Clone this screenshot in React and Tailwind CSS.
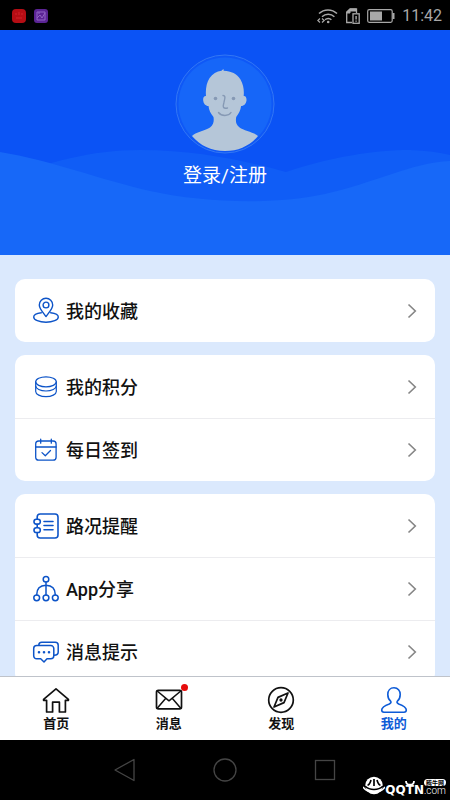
import React from "react";

const font = "font-[Roboto,'Noto_Sans_CJK_SC',sans-serif]";

function Icon({ size = "size-7", children, width = 1.5 }) {
  return (
    <svg
      viewBox="0 0 28 28"
      className={`${size} shrink-0`}
      fill="none"
      stroke="currentColor"
      strokeWidth={width}
      strokeLinecap="round"
      strokeLinejoin="round"
      aria-hidden="true"
    >
      {children}
    </svg>
  );
}

const icons = {
  pin: (
    <Icon width={1.4}>
      <path d="M14 19.500C10.400 14.600 7.300 11.600 7.300 7.900a6.700 6.700 0 0 1 13.400 0c0 3.700-3.100 6.700-6.700 11.600z" />
      <circle cx="14" cy="8" r="2.900" />
      <path d="M9.300 15.800c-4.500.6-7.600 2-7.600 4.200 0 3 5.500 5.200 12.300 5.200s12.300-2.200 12.300-5.200c0-2.200-3.100-3.600-7.600-4.200" />
    </Icon>
  ),
  coins: (
    <Icon width={1.2}>
      <ellipse cx="14" cy="8.800" rx="10.300" ry="5" />
      <path d="M3.700 8.800V13c0 2.700 4.600 5 10.300 5s10.300-2.300 10.300-5V8.800" />
      <path d="M3.700 13v5.400c0 2.800 4.600 5.300 10.300 5.300s10.300-2.500 10.300-5.300V13" />
    </Icon>
  ),
  calendar: (
    <Icon width={1.3}>
      <rect x="3.700" y="5" width="20.400" height="19.200" rx="3" />
      <path d="M3.700 11h20.400M8.700 3.200v4M19.300 3.200v4M10 16.600l3.300 3.100 5.200-5.200" />
    </Icon>
  ),
  notebook: (
    <Icon width={1.6}>
      <path d="M5.200 7.200V5a3 3 0 0 1 3-3H23a3 3 0 0 1 3 3v18a3 3 0 0 1-3 3H8.200a3 3 0 0 1-3-3v-2M5.200 12.500v2.800" />
      <rect x="2" y="7.300" width="6.300" height="4.800" rx="2.300" />
      <rect x="2" y="15.700" width="6.300" height="4.800" rx="2.300" />
      <path d="M12 9.500h9M12 13.500h9M12 17.800h9" />
    </Icon>
  ),
  share: (
    <Icon width={1.5}>
      <circle cx="14" cy="4.300" r="2.800" />
      <circle cx="4.700" cy="22.800" r="2.900" />
      <circle cx="14" cy="22.800" r="2.900" />
      <circle cx="23.300" cy="22.800" r="2.900" />
      <path d="M14 7.200v12.500M4.700 19.800c0-5.600 3.300-9.300 9.300-9.500 6 .2 9.300 3.900 9.300 9.500" />
    </Icon>
  ),
  chat: (
    <Icon width={1.5}>
      <path d="M4.700 7.600h14.100a3 3 0 0 1 3 3v7.200a3 3 0 0 1-3 3h-3.800L12 24l-3.300-3.200h-4a3 3 0 0 1-3-3v-7.200a3 3 0 0 1 3-3z" />
      <path d="M6.800 7.200c0-2 1.200-3 3-3h13.400a3 3 0 0 1 3 3V14c0 2-1.200 3.200-4 3.200" />
      <path d="M7 14.300h.01M12 14.300h.01M17 14.300h.01" strokeWidth="2.600" />
    </Icon>
  ),
  home: (
    <Icon width={1.7}>
      <path d="M14 2.800 1.600 13.300v1h3V26h6v-9.800h6.800V26h6V14.300h3v-1z" />
    </Icon>
  ),
  mail: (
    <Icon width={1.7}>
      <rect x="1.500" y="4.300" width="25" height="18.600" rx="1.800" />
      <path d="M2.200 5 14 14.800 25.800 5M2.200 22.200l8.600-10M25.800 22.200l-8.600-10" strokeWidth="1.500" />
    </Icon>
  ),
  compass: (
    <Icon width={1.7}>
      <circle cx="14" cy="14" r="12.300" />
      <path d="M21 7 17 16.600 7 21 11 11.400z" />
      <circle cx="14" cy="14" r=".8" fill="currentColor" />
    </Icon>
  ),
  person: (
    <Icon width={1.6}>
      <path d="M14 1.800c-3.900 0-6.200 2.800-6.200 6.600 0 2.900 1.200 5.500 3 6.900.6 1-.2 2-1.500 2.600-4.600 1.600-7.600 3-7.600 6.100 0 1.600.8 2.200 2.300 2.200h20c1.500 0 2.300-.6 2.300-2.200 0-3.100-3-4.500-7.600-6.100-1.300-.6-2.100-1.600-1.500-2.600 1.800-1.400 3-4 3-6.900 0-3.800-2.300-6.600-6.200-6.600z" />
    </Icon>
  ),
};

const groups = [
  [{ icon: "pin", label: "我的收藏" }],
  [
    { icon: "coins", label: "我的积分" },
    { icon: "calendar", label: "每日签到" },
  ],
  [
    { icon: "notebook", label: "路况提醒" },
    { icon: "share", label: "App分享" },
    { icon: "chat", label: "消息提示" },
  ],
];

const tabs = [
  { icon: "home", label: "首页" },
  { icon: "mail", label: "消息", unread: true },
  { icon: "compass", label: "发现" },
  { icon: "person", label: "我的", active: true },
];

function StatusBar() {
  return (
    <div className="flex h-[30px] shrink-0 items-center bg-black px-2 pt-px text-[#a8a8a8]">
      <div className="flex flex-1 gap-2 pl-1">
        <svg viewBox="0 0 14 14" className="size-[14px]" aria-hidden="true">
          <rect width="14" height="14" rx="4" fill="#b50d14" />
          <path d="M3 5h2M9 5h2M4 9h6M7 3v3" stroke="#d2232a" fill="none" />
        </svg>
        <svg viewBox="0 0 14 14" className="size-[14px]" aria-hidden="true">
          <rect width="14" height="14" rx="3" fill="#5b2495" />
          <path d="M3 3h8v8H3zM3 9l3-3 2 3 3-5M5 3v2" stroke="#9264c4" fill="none" />
        </svg>
      </div>
      <div className="flex items-center gap-[7px]">
        <svg viewBox="0 0 22 18" className="h-[18px] w-[22px]" fill="none" stroke="currentColor" strokeWidth="1.500" aria-hidden="true">
          <path d="M2 6.500a13 13 0 0 1 18 0M5 9.800a9 9 0 0 1 12.400 0M8 12.800a4.500 4.500 0 0 1 6.400 0" />
          <circle cx="11.200" cy="15" r="1.300" fill="currentColor" stroke="none" />
          <path d="M3 11.500.8 13.500 3 15.500M5 11.500l2.200 2L5 15.500" strokeWidth="1.200" />
        </svg>
        <svg viewBox="0 0 14 16" className="h-4 w-[14px]" fill="none" stroke="currentColor" aria-hidden="true">
          <path d="M6 14.500H.7V4L4 .8h6.500V5" strokeWidth="1.300" />
          <path d="M1 4 4 1h6v2H4v2H1z" fill="currentColor" />
          <rect x="7" y="5.800" width="6.200" height="9.500" strokeWidth="1.300" />
          <path d="M10.100 8v3.500M10.100 12.500v1.200" strokeWidth="1.400" />
        </svg>
        <svg viewBox="0 0 28 14" className="h-[14px] w-[28px]" fill="none" stroke="currentColor" aria-hidden="true">
          <rect x=".7" y=".7" width="24.500" height="12.600" rx="1.500" strokeWidth="1.200" />
          <path d="M26.500 4v6" strokeWidth="2" />
          <rect x="3" y="2.500" width="12" height="9" fill="currentColor" stroke="none" />
        </svg>
        <span className="text-base">11:42</span>
      </div>
    </div>
  );
}

function Avatar() {
  return (
    <svg viewBox="0 0 100 100" className="size-[100px]" aria-hidden="true">
      <circle cx="50" cy="50" r="49" fill="#0f58f6" stroke="#3377f4" strokeWidth="1" />
      <circle cx="50" cy="50" r="46.500" fill="#1666f8" />
      <path
        d="M17 82c3-3.500 14-5.500 18-8.500 4-3.200 4-7 3.500-10.500-3-3.500-4.500-7-5-11-3 0-5-2.500-5.300-5.500-.3-3 .8-4.700 2.800-4.500-.6-6 .3-13 3.600-18 3-4.200 7-6.500 11.900-7.200.8-1.300 1.600-1.500 2.700-1.300-.6.5-.7 1-.5 1.300 7.500.2 13.300 3.200 16.800 8.700 3 5 3.700 11 3.200 16.500 2-.2 3 1.500 2.800 4.500-.4 3-2.300 5.500-5.400 5.500-.6 4-2.100 7.500-4.900 11-.6 4-.6 7.500 3.400 10.500 4 3 15 5 18.400 8.500C75 91.500 64 97 50 97s-25-5.500-33-15z"
        fill="#b5c6d8"
      />
      <circle cx="40.500" cy="44.500" r="1.800" fill="#8699b4" />
      <circle cx="58.500" cy="44.500" r="1.800" fill="#8699b4" />
      <path d="M48 41.500c3 0 1.800 3.500.8 7.500-1.300 4.500-.5 5.800 3.700 5M43.500 58.500c3 4 10 4 12.500 0" fill="none" stroke="#8699b4" strokeWidth="1.400" strokeLinecap="round" />
    </svg>
  );
}

function Header() {
  return (
    <header className="relative flex h-[225px] shrink-0 flex-col items-center bg-[#0b53f5] pt-6">
      <svg viewBox="0 0 450 225" preserveAspectRatio="none" className="absolute inset-0 size-full" aria-hidden="true">
        <path d="M0 150C50 132 90 120 140 120C200 120 250 132 286 142C330 127 375 120 410 120Q435 121 450 125V225H0z" fill="#105df6" />
        <path d="M0 122C50 130 105 151 150 161C205 173 275 175 325 164C375 153 410 133 450 131V225H0z" fill="#1768f8" />
      </svg>
      <button type="button" className="relative flex flex-col items-center gap-2 text-[19px] leading-7 text-white">
        <Avatar />
        <span>登录/注册</span>
      </button>
    </header>
  );
}

function MenuRow({ icon, label }) {
  return (
    <li className="border-t border-[#ececef] first:border-t-0">
      <button type="button" className="flex h-[62px] w-full items-center pr-[18px] pl-[17px] text-left text-[#0d54c8]">
        {icons[icon]}
        <span className="flex-1 pt-[2px] pl-[6px] text-lg font-medium text-[#111111]">{label}</span>
        <svg viewBox="0 0 10 16" className="h-4 w-[10px]" fill="none" stroke="#858585" strokeWidth="1.600" aria-hidden="true">
          <path d="m1.500 1.500 6.800 6.500-6.800 6.500" />
        </svg>
      </button>
    </li>
  );
}

function TabBar() {
  return (
    <nav className="grid h-[64px] shrink-0 grid-cols-4 border-t border-[#bfc3ca] bg-white">
      {tabs.map((tab) => (
        <button
          key={tab.label}
          type="button"
          aria-current={tab.active ? "page" : undefined}
          className={`flex flex-col items-center pt-[9px] text-[13px] leading-5 font-bold ${tab.active ? "text-[#0d5bd7]" : "text-[#111111]"}`}
        >
          <span className="relative">
            {icons[tab.icon]}
            {tab.unread && <span className="absolute -top-[2px] -right-[5px] size-[7px] rounded-full bg-[#e60c0c]" />}
          </span>
          <span>{tab.label}</span>
        </button>
      ))}
    </nav>
  );
}

function SystemNav() {
  return (
    <div className="relative flex h-[60px] shrink-0 items-center justify-center gap-[76px] bg-black text-[#454545]">
      <button type="button" aria-label="Back">
        <svg viewBox="0 0 24 24" className="size-6" fill="none" stroke="currentColor" strokeWidth="1.300" strokeLinejoin="round">
          <path d="M21 1.500v21L2 12z" />
        </svg>
      </button>
      <button type="button" aria-label="Home">
        <svg viewBox="0 0 24 24" className="size-6" fill="none" stroke="currentColor" strokeWidth="1.300">
          <circle cx="12" cy="12" r="11" />
        </svg>
      </button>
      <button type="button" aria-label="Recent">
        <svg viewBox="0 0 24 24" className="size-6" fill="none" stroke="currentColor" strokeWidth="1.300">
          <rect x="2.500" y="2.500" width="19" height="19" />
        </svg>
      </button>
      <div className="absolute right-1 bottom-1 flex items-end text-white">
        <svg viewBox="0 0 22 20" className="h-5 w-[22px]" aria-hidden="true">
          <circle cx="11" cy="9.500" r="8.800" fill="white" />
          <path d="M2 10c3 3 6 3.500 9 3.500s6-.5 9-3.500M8 4c-1 3-1.500 5-3.500 5M14 4c1 3 1.500 5 3.500 5M11 3v7" stroke="black" strokeWidth="1.700" fill="none" />
          <path d="M0 11c3 4.500 7 5 11 5s8-.5 11-5" stroke="white" strokeWidth="1.400" fill="none" />
        </svg>
        <span className="relative font-['DejaVu_Sans'] text-[12px] leading-3 font-bold">
          QQTN
          <svg viewBox="0 0 10 5" className="absolute -top-[3px] right-[9px] h-[5px] w-[10px]" fill="none" stroke="white" strokeWidth="1.800" aria-hidden="true">
            <path d="M1 0C1 5 9 5 9 0" />
          </svg>
        </span>
        <span className="flex flex-col items-center">
          <span className="rounded-full bg-white px-[2px] text-[6px] leading-[7px] font-bold text-black">腾牛网</span>
          <span className="text-[10px] leading-[10px] font-light">.com</span>
        </span>
      </div>
    </div>
  );
}

export default function App() {
  return (
    <div className={`flex h-screen flex-col overflow-hidden bg-[#dbe9fd] ${font}`}>
      <StatusBar />
      <main className="min-h-0 flex-1 overflow-hidden">
        <Header />
        <div className="flex flex-col gap-[13px] px-[15px] pt-6">
          {groups.map((rows) => (
            <ul key={rows[0].label} className="rounded-[10px] bg-white pt-px">
              {rows.map((row) => (
                <MenuRow key={row.label} {...row} />
              ))}
            </ul>
          ))}
        </div>
      </main>
      <TabBar />
      <SystemNav />
    </div>
  );
}
